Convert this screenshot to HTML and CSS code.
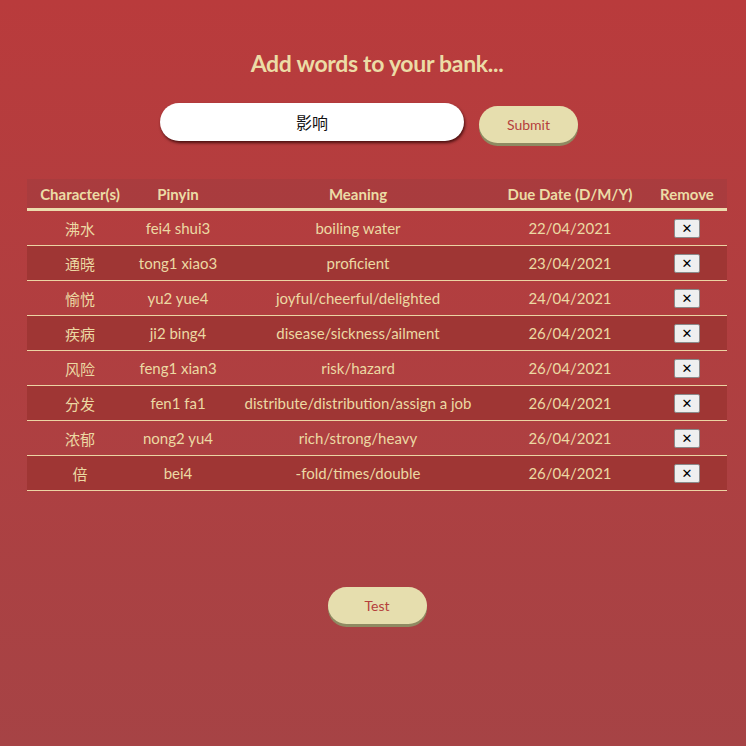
FILE: index.html
```html
<!DOCTYPE html>
<html lang="en">
<head>
<meta charset="utf-8">
<title>Word bank</title>
<link rel="stylesheet" href="styles.css">
</head>
<body>
<main class="page">
  <h1 class="title">Add words to your bank...</h1>
  <form class="add-form">
    <input class="word-input" type="text" value="影响">
    <button class="pill-btn submit-btn" type="button">Submit</button>
  </form>
  <table class="words">
    <thead>
      <tr><th class="c-char">Character(s)</th><th class="c-pin">Pinyin</th><th class="c-mean">Meaning</th><th class="c-date">Due Date (D/M/Y)</th><th class="c-rem">Remove</th></tr>
    </thead>
    <tbody>
      <tr><td class="cjk">沸水</td><td>fei4 shui3</td><td>boiling water</td><td>22/04/2021</td><td><button class="x-btn" type="button">✕</button></td></tr>
      <tr><td class="cjk">通晓</td><td>tong1 xiao3</td><td>proficient</td><td>23/04/2021</td><td><button class="x-btn" type="button">✕</button></td></tr>
      <tr><td class="cjk">愉悦</td><td>yu2 yue4</td><td>joyful/cheerful/delighted</td><td>24/04/2021</td><td><button class="x-btn" type="button">✕</button></td></tr>
      <tr><td class="cjk">疾病</td><td>ji2 bing4</td><td>disease/sickness/ailment</td><td>26/04/2021</td><td><button class="x-btn" type="button">✕</button></td></tr>
      <tr><td class="cjk">风险</td><td>feng1 xian3</td><td>risk/hazard</td><td>26/04/2021</td><td><button class="x-btn" type="button">✕</button></td></tr>
      <tr><td class="cjk">分发</td><td>fen1 fa1</td><td>distribute/distribution/assign a job</td><td>26/04/2021</td><td><button class="x-btn" type="button">✕</button></td></tr>
      <tr><td class="cjk">浓郁</td><td>nong2 yu4</td><td>rich/strong/heavy</td><td>26/04/2021</td><td><button class="x-btn" type="button">✕</button></td></tr>
      <tr><td class="cjk">倍</td><td>bei4</td><td>-fold/times/double</td><td>26/04/2021</td><td><button class="x-btn" type="button">✕</button></td></tr>
    </tbody>
  </table>
  <div class="test-row">
    <button class="pill-btn test-btn" type="button">Test</button>
  </div>
</main>
</body>
</html>
```

FILE: styles.css
```css
html, body {
  margin: 0;
  padding: 0;
  height: 100%;
}
body {
  background: linear-gradient(to bottom, #b93b3c 0%, #a64345 100%);
  font-family: Lato, "Noto Sans", "Noto Sans CJK SC", sans-serif;
  color: #ecd9a3;
}
.page {
  box-sizing: border-box;
  width: 746px;
  height: 746px;
  padding: 0 0 0 8px;
  display: flex;
  flex-direction: column;
  align-items: center;
}
.title {
  margin: 47px 0 0;
  font-size: 23px;
  font-weight: 700;
  color: #ecdca6;
  line-height: 32px;
  letter-spacing: -0.3px;
}
.add-form {
  margin-top: 24px;
  display: flex;
  align-items: flex-start;
  gap: 15px;
  padding-right: 16px;
}
.word-input {
  box-sizing: border-box;
  width: 304px;
  height: 38px;
  border: none;
  border-radius: 19px;
  background: #fff;
  box-shadow: 1px 2px 3px rgba(40, 0, 0, 0.75);
  text-align: center;
  font-family: "Noto Sans CJK SC", sans-serif;
  font-size: 16px;
  color: #111;
  outline: none;
}
.pill-btn {
  box-sizing: border-box;
  width: 99px;
  height: 37px;
  border: none;
  border-radius: 19px;
  background: #e6deae;
  box-shadow: 0 3px 0 #8f8a62;
  color: #b5403c;
  font-family: Lato, "Noto Sans", sans-serif;
  font-size: 14px;
  padding: 0;
}
.submit-btn {
  margin-top: 3px;
}
.words {
  margin-top: 36px;
  width: 700px;
  border-collapse: collapse;
  text-align: center;
  font-size: 15px;
}
.words thead tr {
  background: rgba(150, 60, 62, 0.35);
}
.words th {
  height: 29px;
  padding: 0;
  font-weight: 700;
  color: #ecdca6;
  border-bottom: 3px solid #ecdcad;
  vertical-align: middle;
}
.words td {
  height: 34px;
  padding: 0;
  border-bottom: 1px solid #ecd4a3;
  vertical-align: middle;
}
.words tbody tr:nth-child(even) {
  background: #9f3634;
}
.c-char { width: 106px; }
.c-pin { width: 90px; }
.c-mean { width: 270px; }
.c-date { width: 154px; }
.c-rem { width: 80px; }
.cjk {
  font-family: "Noto Sans CJK SC", sans-serif;
  font-size: 15px;
}
.x-btn {
  box-sizing: border-box;
  width: 26px;
  height: 19px;
  padding: 0;
  background: #efefef;
  border: 1px solid #8a8a8a;
  border-radius: 2px;
  font-size: 13px;
  font-weight: 700;
  line-height: 16px;
  color: #000;
  font-family: "DejaVu Sans", sans-serif;
}
.test-row {
  margin-top: 96px;
}
```
